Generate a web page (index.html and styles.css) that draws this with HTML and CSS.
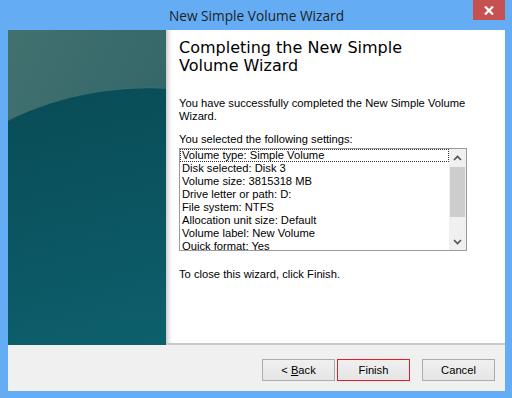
FILE: index.html
```html
<!DOCTYPE html>
<html>
<head>
<meta charset="utf-8">
<link rel="stylesheet" href="styles.css">
</head>
<body>
<div class="window">
  <div class="titlebar">
    <span class="spacer"></span>
    <span class="title">New Simple Volume Wizard</span>
    <div class="close-wrap">
      <div class="close">
        <svg width="10" height="9" viewBox="0 0 10 9"><path d="M1 0.5 L9 8.5 M9 0.5 L1 8.5" stroke="#fff" stroke-width="2.2" fill="none"/></svg>
      </div>
    </div>
  </div>
  <div class="client">
    <div class="main">
      <div class="banner">
        <svg class="banner-art" viewBox="0 0 158 315" preserveAspectRatio="none">
          <defs>
            <linearGradient id="upper" x1="0" y1="0" x2="1" y2="1">
              <stop offset="0" stop-color="#42716f"/>
              <stop offset="0.6" stop-color="#35676a"/>
              <stop offset="1" stop-color="#2c6068"/>
            </linearGradient>
            <linearGradient id="lower" x1="0.3" y1="0" x2="0.6" y2="1">
              <stop offset="0" stop-color="#084c56"/>
              <stop offset="0.45" stop-color="#0c5966"/>
              <stop offset="1" stop-color="#106a78"/>
            </linearGradient>
          </defs>
          <rect x="0" y="0" width="158" height="315" fill="url(#upper)"/>
          <ellipse cx="142" cy="258" rx="260" ry="200" fill="url(#lower)" stroke="rgba(255,255,255,0.07)" stroke-width="1"/>
        </svg>
      </div>
      <div class="content">
        <h1 class="heading">Completing the New Simple Volume Wizard</h1>
        <p class="text intro">You have successfully completed the New Simple Volume Wizard.</p>
        <p class="text label">You selected the following settings:</p>
        <div class="listbox">
          <ul class="items">
            <li class="item focused">Volume type: Simple Volume</li>
            <li class="item">Disk selected: Disk 3</li>
            <li class="item">Volume size: 3815318 MB</li>
            <li class="item">Drive letter or path: D:</li>
            <li class="item">File system: NTFS</li>
            <li class="item">Allocation unit size: Default</li>
            <li class="item">Volume label: New Volume</li>
            <li class="item">Quick format: Yes</li>
          </ul>
          <div class="scrollbar">
            <div class="arrow">
              <svg width="9" height="6" viewBox="0 0 9 6"><path d="M1 5 L4.5 1.5 L8 5" stroke="#505050" stroke-width="1.6" fill="none"/></svg>
            </div>
            <div class="track"><div class="thumb"></div></div>
            <div class="arrow">
              <svg width="9" height="6" viewBox="0 0 9 6"><path d="M1 1 L4.5 4.5 L8 1" stroke="#505050" stroke-width="1.6" fill="none"/></svg>
            </div>
          </div>
        </div>
        <p class="text closing">To close this wizard, click Finish.</p>
      </div>
    </div>
    <div class="footer">
      <div class="btn"><span>&lt; <u>B</u>ack</span></div>
      <div class="btn default"><span>Finish</span></div>
      <div class="btn cancel"><span>Cancel</span></div>
    </div>
  </div>
</div>
</body>
</html>
```

FILE: styles.css
```css
* { box-sizing: border-box; }
html, body { margin: 0; padding: 0; }
body {
  width: 512px;
  height: 398px;
  overflow: hidden;
  background: #64adf5;
}
.window {
  width: 512px;
  height: 398px;
  padding: 0 7px 7px 8px;
  display: flex;
  flex-direction: column;
  background: #64adf5;
}
.titlebar {
  height: 30px;
  display: grid;
  grid-template-columns: 1fr auto 1fr;
}
.title {
  font-family: "Open Sans", "Noto Sans", sans-serif;
  font-size: 13.7px;
  color: #1e1e1e;
  align-self: center;
  padding-top: 1px;
}
.close-wrap {
  display: flex;
  justify-content: flex-end;
  align-items: flex-start;
}
.close {
  width: 32px;
  height: 20px;
  background: #c75050;
  display: flex;
  align-items: center;
  justify-content: center;
}
.client {
  flex: 1;
  display: flex;
  flex-direction: column;
  background: #f0f0f0;
}
.main {
  height: 315px;
  display: flex;
}
.banner {
  flex: 0 0 158px;
  height: 315px;
}
.banner-art {
  display: block;
  width: 158px;
  height: 315px;
}
.content {
  flex: 1;
  background: linear-gradient(to right, #c4c4c4 0, #d9d9d9 1px, #ececec 3px, #fafafa 5px, #fff 7px);
  border-bottom: 2px solid #c9c9c9;
  padding: 9px 36px 0 13px;
}
.heading {
  margin: 0;
  max-width: 250px;
  font-family: "DejaVu Sans", Verdana, sans-serif;
  font-weight: normal;
  font-size: 16px;
  line-height: 18px;
  color: #000;
}
.text {
  margin: 0;
  font-family: "Liberation Sans", Arial, sans-serif;
  font-size: 11.2px;
  line-height: 13px;
  color: #000;
}
.intro { margin-top: 22px; }
.label { margin-top: 10px; }
.listbox {
  margin-top: 2px;
  width: 288px;
  height: 103px;
  border: 1px solid #9a9a9a;
  background: #fff;
  display: flex;
  overflow: hidden;
}
.items {
  list-style: none;
  margin: 0;
  padding: 0;
  flex: 1;
  overflow: hidden;
  font-family: "Liberation Sans", Arial, sans-serif;
  font-size: 11.2px;
  line-height: 11px;
  color: #000;
}
.item {
  height: 13px;
  padding: 0 1px;
  border: 1px solid transparent;
  white-space: nowrap;
}
.item.focused {
  border: 1px dotted #333;
}
.scrollbar {
  flex: 0 0 17px;
  background: #f0f0f0;
  display: flex;
  flex-direction: column;
}
.arrow {
  height: 17px;
  display: flex;
  align-items: center;
  justify-content: center;
}
.track {
  flex: 1;
  padding: 1px 1px 0 1px;
}
.thumb {
  height: 50px;
  background: #cdcdcd;
}
.closing { margin-top: 17px; }
.footer {
  flex: 1;
  display: flex;
  justify-content: flex-end;
  align-items: flex-start;
  padding: 14px 10px 0 0;
  gap: 2px;
}
.btn {
  width: 73px;
  height: 22px;
  display: flex;
  align-items: center;
  justify-content: center;
  border: 1px solid #acacac;
  background: linear-gradient(#f0f0f0, #e5e5e5);
  font-family: "Liberation Sans", Arial, sans-serif;
  font-size: 11.2px;
  color: #000;
}
.btn.default {
  border: 1px solid #e81c24;
}
.btn.cancel { margin-left: 10px; }
```
